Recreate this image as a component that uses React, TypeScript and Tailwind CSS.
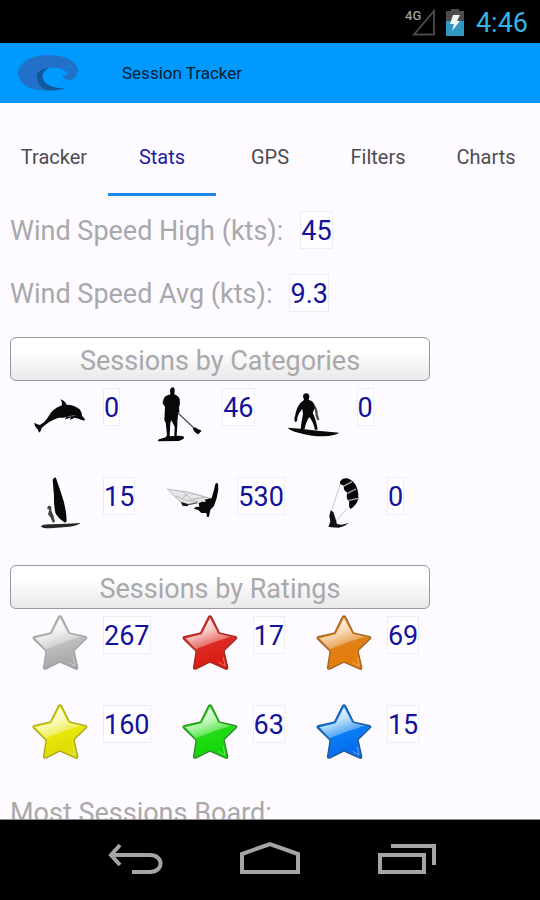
import type { ReactNode } from "react";

const tabs = ["Tracker", "Stats", "GPS", "Filters", "Charts"];

function Dolphin() {
  return (
    <svg viewBox="30 15 180 180" className="size-full" aria-hidden="true">
      <path d="M43 128Q52 133 60 135Q74 127 83 113Q97 85 126 76Q127 67 122 58Q136 64 140 74Q164 74 179 88Q187 99 186 108Q195 114 195 121Q187 122 176 116L163 113Q158 118 149 119L153 112Q144 117 134 118L139 110Q129 115 116 113Q89 121 65 144Q64 153 57 158Q55 148 49 143Q43 137 43 128Z" fill="#080808" />
      <path d="M172 108Q155 103 137 112Q157 107 172 108Z" fill="#bbb" />
    </svg>
  );
}

function Paddler() {
  return (
    <svg viewBox="390 15 180 180" className="size-full" aria-hidden="true">
      <path d="M453 30Q455 22 461 22Q468 23 467 33L466 43Q479 48 482 57L483 72Q479 78 481 97L477 104Q475 119 475 135L473 167L491 168Q498 173 493 177L480 183L418 184Q414 181 420 178L440 172L444 165L440 128L436 120L438 80Q430 73 431 66Q435 50 442 47L454 43Z" fill="#080808" />
      <path d="M454 128L457 121L467 140L466 168L452 169Z" fill="#fdfbff" />
      <path d="M476 98L525 144" stroke="#555" strokeWidth="4" />
      <path d="M521 145Q528 139 535 146L548 152L538 163Q527 160 521 145Z" fill="#080808" />
    </svg>
  );
}

function Surfer() {
  return (
    <svg viewBox="0 0 180 180" className="size-full" aria-hidden="true">
      <path d="M86 58Q99 74 98 90L103 105" fill="none" stroke="#4c4c4c" strokeWidth="7" />
      <path d="M57 34Q58 25 67 25Q76 26 76 35L74 44Q86 47 90 56L92 68L86 84Q96 102 101 134L92 134Q91 116 76 96Q66 109 62 132L50 132Q53 105 57 88L55 72Q43 83 40 98Q41 110 34 111Q29 106 33 94Q36 70 49 54L60 45Z" fill="#080808" />
      <path d="M11 128Q28 129 48 131L108 138L166 143Q150 153 118 154Q78 154 43 143Q19 137 11 128Z" fill="#080808" />
    </svg>
  );
}

function Sailboard() {
  return (
    <svg viewBox="30 282 180 180" className="size-full" aria-hidden="true">
      <path d="M98 299Q104 289 108 294L124 341Q139 383 140 424L135 428Q113 414 106 398Q101 374 102 348Z" fill="#080808" />
      <path d="M83 379Q90 374 94 381L94 392L100 406L105 424L99 429L91 412L84 403L88 389L82 387Z" fill="#444" />
      <path d="M63 438Q70 432 92 433L140 431L182 429Q176 436 149 440L92 445Q64 446 63 438Z" fill="#282828" />
    </svg>
  );
}

function Windsurfer() {
  return (
    <svg viewBox="0 0 180 180" className="size-full" aria-hidden="true">
      <path d="M8 45L60 51L105 60L142 73L136 84L94 91L58 93L40 76Z" fill="#e6e6e8" />
      <path d="M8 45Q40 50 70 54L144 75M14 50L56 90M34 66L72 80L104 82M57 55L82 76L124 70M73 58L57 72" fill="none" stroke="#9a9a9a" strokeWidth="2" />
      <path d="M51 84L75 91L70 97L55 95Z" fill="#161616" />
      <path d="M74 92L100 86" stroke="#555" strokeWidth="4" />
      <path d="M96 98L106 99L104 88L114 83L126 84L122 77L143 72Q150 50 154 30Q158 24 162 29L163 46Q160 72 150 96L139 107L135 128L129 129L127 117L112 117L103 108L90 104Z" fill="#080808" />
    </svg>
  );
}

function Kite() {
  return (
    <svg viewBox="288 282 180 180" className="size-full" aria-hidden="true">
      <path d="M367 311L341 391M389 383L354 423" fill="none" stroke="#c9c9cc" strokeWidth="3" />
      <path d="M366 305Q373 293 388 295Q406 301 415 319Q424 341 420 360Q414 376 398 387Q390 380 394 366Q382 354 388 338Q374 330 378 318L366 311Z" fill="#080808" />
      <path d="M376 319L402 305M389 340L414 327M390 362L421 355" stroke="#aaa" strokeWidth="4" />
      <path d="M338 391L346 396L351 411L357 432L371 434L393 429Q381 439 362 443L340 442L331 440L337 425L334 408Z" fill="#121212" />
    </svg>
  );
}

type StarTone = { id: string; light: string; base: string; deep: string; edge: string };

function Star({ id, light, base, deep, edge }: StarTone) {
  const shape =
    "M176 200Q180 195 184 200L207 246Q209 249 213 250L257 260Q263 263 258 267L224 300Q222 303 223 307L233 352Q233 360 226 357L184 338Q180 336 176 338L137 357Q129 359 131 351L138 307Q138 303 135 300L101 267Q97 262 103 260L147 250Q151 249 153 246Z";
  return (
    <svg viewBox="90 189 180 180" className="size-full" aria-hidden="true">
      <defs>
        <linearGradient id={id + "-body"} x1="0.35" y1="0" x2="0.6" y2="1">
          <stop offset="0" stopColor={base} />
          <stop offset="0.55" stopColor={base} />
          <stop offset="1" stopColor={deep} />
        </linearGradient>
        <linearGradient id={id + "-gloss"} x1="0.2" y1="0.1" x2="0.65" y2="1">
          <stop offset="0" stopColor={light} />
          <stop offset="0.4" stopColor={light} stopOpacity="0.8" />
          <stop offset="1" stopColor={light} stopOpacity="0.1" />
        </linearGradient>
      </defs>
      <path d={shape} fill={`url(#${id}-body)`} stroke={edge} strokeWidth="4" />
      <path d="M180 204L205 251L243 260Q190 275 137 298L107 265L155 253Z" fill={`url(#${id}-gloss)`} />
      <path d="M206 337L225 348L220 322" fill="none" stroke={light} strokeOpacity="0.6" strokeWidth="2" />
    </svg>
  );
}

const stars: Record<string, StarTone> = {
  gray: { id: "gray", light: "#ffffff", base: "#bdbdbd", deep: "#a2a2a2", edge: "#a3a3a3" },
  red: { id: "red", light: "#fff0ee", base: "#dc2a22", deep: "#d8180f", edge: "#9c3029" },
  orange: { id: "orange", light: "#fff3e4", base: "#e08018", deep: "#e67b05", edge: "#9d662a" },
  yellow: { id: "yellow", light: "#fffff0", base: "#e6e60a", deep: "#dbd900", edge: "#aaa520" },
  green: { id: "green", light: "#edffe9", base: "#22db16", deep: "#0fd305", edge: "#328a2c" },
  blue: { id: "blue", light: "#e9f8ff", base: "#087cf3", deep: "#0768ed", edge: "#245a91" },
};

type Entry = { name: string; value: string; icon: ReactNode };

const categories: Entry[][] = [
  [
    { name: "Dolphin", value: "0", icon: <Dolphin /> },
    { name: "Paddle board", value: "46", icon: <Paddler /> },
    { name: "Surf", value: "0", icon: <Surfer /> },
  ],
  [
    { name: "Sailboard", value: "15", icon: <Sailboard /> },
    { name: "Windsurf", value: "530", icon: <Windsurfer /> },
    { name: "Kite", value: "0", icon: <Kite /> },
  ],
];

const ratings: Entry[][] = [
  [
    { name: "Gray star", value: "267", icon: <Star {...stars.gray} /> },
    { name: "Red star", value: "17", icon: <Star {...stars.red} /> },
    { name: "Orange star", value: "69", icon: <Star {...stars.orange} /> },
  ],
  [
    { name: "Yellow star", value: "160", icon: <Star {...stars.yellow} /> },
    { name: "Green star", value: "63", icon: <Star {...stars.green} /> },
    { name: "Blue star", value: "15", icon: <Star {...stars.blue} /> },
  ],
];

function Value({ children }: { children: ReactNode }) {
  return (
    <output className="block h-9 bg-[#fefdff] leading-[38px] text-[#12129a] ring-1 ring-[#efedf1]">{children}</output>
  );
}

function WindRow({ label, value }: { label: string; value: string }) {
  return (
    <div className="flex gap-[18px]">
      <span className="h-9 leading-[38px]">{label}</span>
      <Value>{value}</Value>
    </div>
  );
}

function Tally({ title, rows }: { title: string; rows: Entry[][] }) {
  return (
    <section>
      <button className="mx-2.5 block h-11 w-[420px] rounded-md border border-[#99979b] bg-linear-to-b from-white from-30% to-[#e9e8ea] pt-1 leading-[38px]">
        {title}
      </button>
      <div className="flex flex-col gap-7 pt-1">
        {rows.map((row, i) => (
          <ul key={i} className="flex">
            {row.map((entry) => (
              <li key={entry.name} className="flex" aria-label={entry.name}>
                <span className="block h-[61px] w-[104px] pl-[30px]">
                  <span className="block size-[60px]">{entry.icon}</span>
                </span>
                <div className="pt-1">
                  <Value>{entry.value}</Value>
                </div>
              </li>
            ))}
          </ul>
        ))}
      </div>
    </section>
  );
}

function StatusBar() {
  return (
    <div className="flex h-[43px] shrink-0 items-center justify-end gap-3 bg-black pr-3">
      <div className="flex gap-2.5">
        <svg viewBox="0 0 32 28" className="h-7 w-8" aria-hidden="true">
          <path d="M10 26.500H30V3Z" fill="none" stroke="#4b4b4b" strokeWidth="1.800" />
          <text x="1" y="12" fill="#9c9c9c" fontFamily="Roboto" fontWeight="500" fontSize="13">4G</text>
        </svg>
        <svg viewBox="0 0 18 28" className="h-7 w-[18px]" aria-hidden="true">
          <path d="M0 3H5V1H13V3H18V14H0Z" fill="#4c4c4c" />
          <path d="M0 13H18V28H0Z" fill="#3198c3" />
          <path d="M7 7H14L11 13H14L6 23L8 16H4Z" fill="#f2f6f8" />
        </svg>
      </div>
      <time className="pt-0.5 text-[27px] leading-8 text-[#33b5e5]">4:46</time>
    </div>
  );
}

function AppHeader() {
  return (
    <header className="flex h-[60px] shrink-0 items-center bg-[#0099ff] pl-4">
      <svg viewBox="48 159 192 120" className="h-10 w-16" aria-hidden="true">
        <path d="M54 214Q61 189 86 177Q111 165 140 166Q179 163 207 178Q229 190 234 208Q234 227 220 237Q205 244 190 233L188 225Q202 229 204 221Q190 207 180 206Q151 197 133 213Q117 235 137 252Q153 265 190 265Q163 275 125 271Q86 268 67 249Q54 235 54 214Z" fill="#2171c9" />
        <path d="M146 203Q115 207 110 225Q113 266 149 271Q177 272 194 265Q154 264 141 252Q122 239 129 220Q133 210 146 203Z" fill="#10589b" />
        <path d="M199 214Q194 199 212 198Q222 201 218 212" fill="none" stroke="#137ee0" strokeWidth="4" />
      </svg>
      <h1 className="pt-0.5 pl-[42px] text-[17px] text-[#071c30]">Session Tracker</h1>
    </header>
  );
}

function SystemNav() {
  const button = "flex h-16 w-[108px] items-center justify-center";
  return (
    <nav className="flex h-20 shrink-0 items-center justify-center gap-7 bg-black" aria-label="System">
      <button className={button} aria-label="Back">
        <svg viewBox="0 0 60 40" className="h-10 w-[60px]" fill="none" stroke="#a5a5a5" strokeWidth="4">
          <path d="M16 5L7 15L16 25M7 15H46C60 15 60 32 46 32H28" />
        </svg>
      </button>
      <button className={button} aria-label="Home">
        <svg viewBox="0 0 64 40" className="h-10 w-16" fill="none" stroke="#a5a5a5" strokeWidth="4">
          <path d="M4 32V14L32 4L60 14V32Z" />
        </svg>
      </button>
      <button className={button} aria-label="Recent apps">
        <svg viewBox="0 0 60 40" className="h-10 w-[60px]" fill="none" stroke="#a5a5a5" strokeWidth="4">
          <path d="M4 15H48V32H4ZM15 6H58V25" />
        </svg>
      </button>
    </nav>
  );
}

export default function App() {
  return (
    <div className="flex h-screen flex-col overflow-hidden bg-[#fdfbff] font-[Roboto,sans-serif]">
      <StatusBar />
      <AppHeader />
      <div role="tablist" className="flex h-[93px] shrink-0">
        {tabs.map((tab) => (
          <button
            key={tab}
            role="tab"
            aria-selected={tab === "Stats"}
            className={
              tab === "Stats"
                ? "flex-1 border-b-3 border-[#1f88e5] pt-[18px] text-xl text-[#1c1c9c]"
                : "flex-1 border-b-3 border-transparent pt-[18px] text-xl text-[#4d4c50]"
            }
          >
            {tab}
          </button>
        ))}
      </div>
      <main className="min-h-0 flex-1 overflow-y-auto border-b border-[#8b8b8d] pt-4 text-[27px] text-[#a9a8ab] [scrollbar-width:none]">
        <div className="flex flex-col gap-[27px] px-2.5 pb-[26px]">
          <WindRow label="Wind Speed High (kts):" value="45" />
          <WindRow label="Wind Speed Avg (kts):" value="9.3" />
        </div>
        <div className="flex flex-col gap-[30px]">
          <Tally title="Sessions by Categories" rows={categories} />
          <Tally title="Sessions by Ratings" rows={ratings} />
          <h2 className="px-2.5 leading-10">Most Sessions Board:</h2>
        </div>
      </main>
      <SystemNav />
    </div>
  );
}
